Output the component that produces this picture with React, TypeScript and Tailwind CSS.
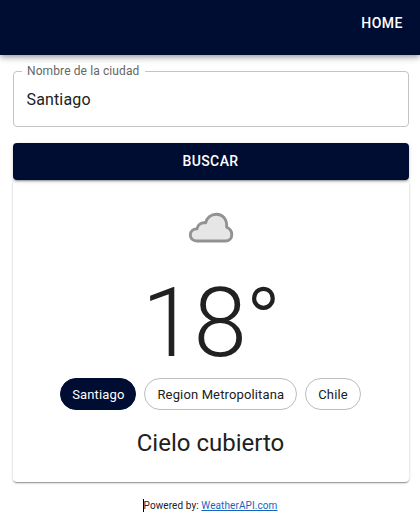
const font = "font-['Roboto','Noto_Sans',sans-serif]";

function Header() {
  return (
    <header className="relative flex h-[55px] items-start justify-end bg-[#000d33] pr-[17px] pt-[11px] shadow-[0_2px_4px_-1px_rgba(0,0,0,0.2),0_4px_5px_0_rgba(0,0,0,0.14),0_1px_10px_0_rgba(0,0,0,0.12)]">
      <a className="text-[14px] font-medium leading-[24px] tracking-[0.5px] text-white">HOME</a>
    </header>
  );
}

function CityField() {
  return (
    <div className="relative mt-4 flex h-14 items-center rounded-[4px] border border-[#c4c4c4] pl-[12.5px] pr-[13px]">
      <label className="absolute left-[8px] top-[-9px] bg-white pl-[5px] pr-[6px] text-[12px] leading-[17px] tracking-[0.11px] text-[#666666]">
        Nombre de la ciudad
      </label>
      <span className="text-[16px] leading-[23px] tracking-[0.15px] text-[#212121]">Santiago</span>
    </div>
  );
}

function Chip({ label, filled = false }: { label: string; filled?: boolean }) {
  return (
    <span
      className={`flex h-8 items-center rounded-full border pt-px text-[13px] tracking-[0.14px] ${
        filled ? "border-[#000d33] bg-[#000d33] px-[11px] text-white" : "border-[#bdbdbd] px-[12px] text-[#212121]"
      }`}
    >
      {label}
    </span>
  );
}

function CloudIcon() {
  return (
    <svg className="mr-[2px] h-[34px] w-[48px]" viewBox="0 0 48 34" aria-hidden="true">
      <path
        d="M10.8 31 C6.9 31 4.3 28.4 4.3 25.1 C4.3 21.6 7 18.8 11 18.7 C11.5 14.8 15 12.2 19.6 12.9 C20.8 7.9 25 4.2 30.4 4.2 C36.6 4.2 41.2 9 40.7 17.2 C43.8 18.6 45.8 21.2 45.8 24.4 C45.8 28.4 43.2 31 39.4 31 Z"
        fill="#e6e6e7"
        stroke="#929292"
        strokeWidth="2.9"
        strokeLinejoin="round"
      />
    </svg>
  );
}

export default function App() {
  return (
    <div className={`h-[528px] overflow-hidden bg-white text-[#212121] ${font}`}>
      <Header />
      <main className="ml-[13px] mr-[11px]">
        <CityField />
        <button className="relative mt-4 block h-[37px] w-full rounded-[4px] bg-[#000d33] pb-px pr-px text-[14px] font-medium leading-[24px] tracking-[0.4px] text-white shadow-[0_3px_1px_-2px_rgba(0,0,0,0.2),0_2px_2px_0_rgba(0,0,0,0.14),0_1px_5px_0_rgba(0,0,0,0.12)]">
          BUSCAR
        </button>
        <section className="flex h-[302px] flex-col items-center rounded-[4px] bg-white pt-[30px] shadow-[0_2px_1px_-1px_rgba(0,0,0,0.2),0_1px_1px_0_rgba(0,0,0,0.14),0_1px_3px_0_rgba(0,0,0,0.2)]">
          <CloudIcon />
          <h1 className="mb-[-1px] mt-[23px] text-[96px] font-light leading-[112px] tracking-[-1.5px]">18°</h1>
          <div className="flex gap-2 pr-px">
            <Chip label="Santiago" filled />
            <Chip label="Region Metropolitana" />
            <Chip label="Chile" />
          </div>
          <h2 className="mr-px mt-[17px] text-[24px] leading-[32px]">Cielo cubierto</h2>
        </section>
        <footer className="mt-[16px] flex justify-center pr-[2px] text-[10px] leading-[15px] tracking-[0.09px]">
          <span className="mt-px h-[13px] w-px bg-black" />
          <span>
            Powered by: <a className="text-[#1565c0] underline">WeatherAPI.com</a>
          </span>
        </footer>
      </main>
    </div>
  );
}
